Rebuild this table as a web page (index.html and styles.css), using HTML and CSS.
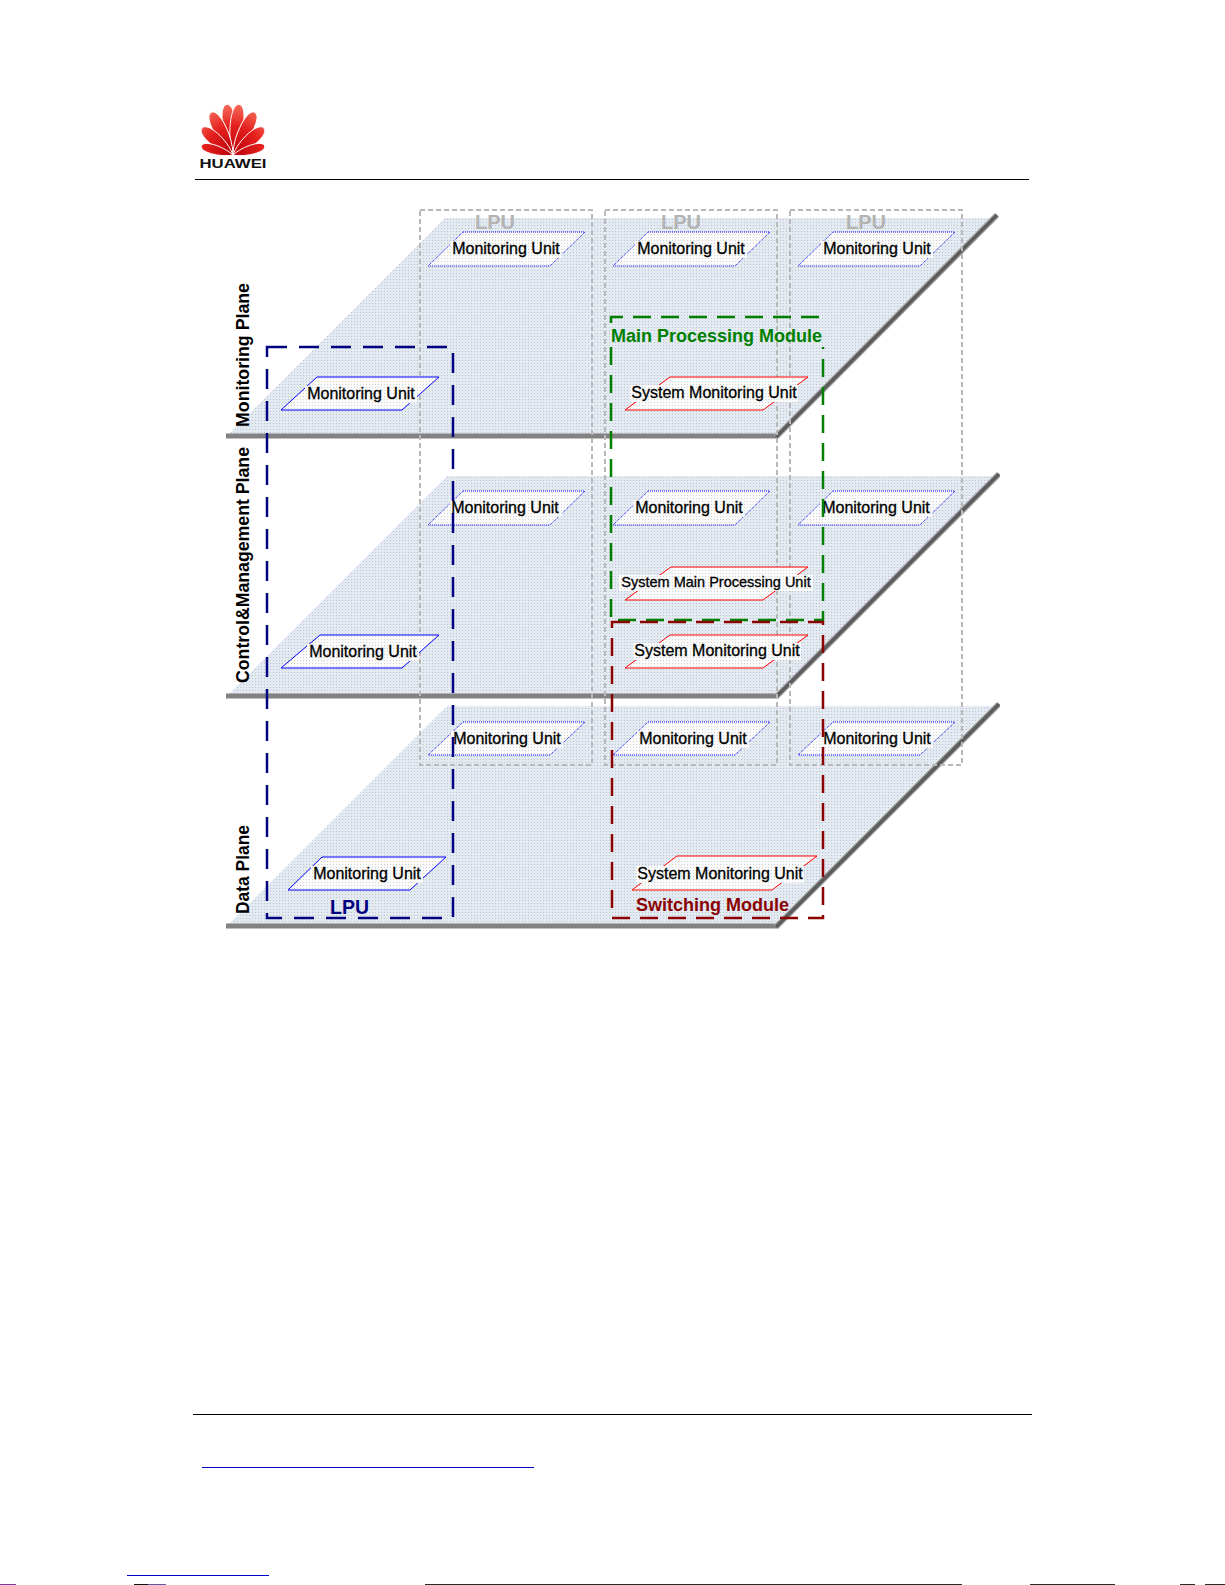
FILE: index.html
```html
<!DOCTYPE html>
<html lang="en">
<head>
<meta charset="utf-8">
<title>Monitoring Plane Architecture</title>
<link rel="stylesheet" href="styles.css">
</head>
<body>
<div class="page">
  <header class="header">
    <svg class="logo" viewBox="0 0 70 70" width="70" height="70">
      <defs>
        <radialGradient id="petalGrad" cx="0" cy="0" r="52" gradientUnits="userSpaceOnUse">
          <stop offset="0" stop-color="#b8000c"/>
          <stop offset="0.55" stop-color="#e41f1c"/>
          <stop offset="1" stop-color="#f8705e"/>
        </radialGradient>
      </defs>
      <g transform="translate(35,54)" class="petals">
        <path transform="rotate(-7)" d="M0,0 C-8.5,-18 -9,-51 0,-51 C9,-51 8.5,-18 0,0Z"/>
        <path transform="rotate(7)" d="M0,0 C-8.5,-18 -9,-51 0,-51 C9,-51 8.5,-18 0,0Z"/>
        <path transform="rotate(-27)" d="M0,0 C-8.5,-17 -9,-48 0,-48 C9,-48 8.5,-17 0,0Z"/>
        <path transform="rotate(27)" d="M0,0 C-8.5,-17 -9,-48 0,-48 C9,-48 8.5,-17 0,0Z"/>
        <path transform="rotate(-49)" d="M0,0 C-8,-14 -8.5,-41 0,-41 C8.5,-41 8,-14 0,0Z"/>
        <path transform="rotate(49)" d="M0,0 C-8,-14 -8.5,-41 0,-41 C8.5,-41 8,-14 0,0Z"/>
        <path transform="rotate(-74)" d="M0,0 C-6,-12 -6.5,-33 0,-33 C6.5,-33 6,-12 0,0Z"/>
        <path transform="rotate(74)" d="M0,0 C-6,-12 -6.5,-33 0,-33 C6.5,-33 6,-12 0,0Z"/>
      </g>
      <text class="logo-text" x="1.5" y="66.5" textLength="67" lengthAdjust="spacingAndGlyphs">HUAWEI</text>
    </svg>
  </header>

  <figure class="diagram-wrap">
    <svg class="diagram" viewBox="220 200 780 740" width="780" height="740">
      <defs>
        <pattern id="planeDots" width="3" height="3" patternUnits="userSpaceOnUse">
          <rect width="3" height="3" fill="#e3eaf2"/>
          <rect width="1" height="1" fill="#bcc4cd"/>
        </pattern>
        <pattern id="unitDots" width="3" height="3" patternUnits="userSpaceOnUse">
          <rect width="3" height="3" fill="#fbfbfb"/>
          <rect width="1" height="1" fill="#d2d2d2"/>
        </pattern>
      </defs>

      <!-- planes -->
      <polygon class="plane" points="227,436 777,436 995,218 445,218"/>
      <polygon class="plane" points="227,696 777,696 997,476 447,476"/>
      <polygon class="plane" points="227,926 777,926 997,706 447,706"/>

      <!-- plane edges -->
      <rect class="bar" x="226" y="433.5" width="552" height="5"/>
      <rect class="bar" x="226" y="693.5" width="552" height="5"/>
      <rect class="bar" x="226" y="923.5" width="552" height="5"/>
      <line class="diag-edge" x1="776" y1="437" x2="997" y2="215"/>
      <line class="diag" x1="776" y1="437" x2="997" y2="215"/>
      <line class="diag-edge" x1="776" y1="697" x2="999" y2="474"/>
      <line class="diag" x1="776" y1="697" x2="999" y2="474"/>
      <line class="diag-edge" x1="776" y1="927" x2="999" y2="704"/>
      <line class="diag" x1="776" y1="927" x2="999" y2="704"/>

      <!-- LPU columns -->
      <rect class="lpu-box" x="420" y="210" width="172" height="555"/>
      <rect class="lpu-box" x="605" y="210" width="172" height="555"/>
      <rect class="lpu-box" x="790" y="210" width="172" height="555"/>
      <text class="lpu-ghost" x="475" y="229">LPU</text>
      <text class="lpu-ghost" x="661" y="229">LPU</text>
      <text class="lpu-ghost" x="846" y="229">LPU</text>

      <!-- LPU monitoring units, monitoring plane -->
      <polygon class="unit unit-lpu" points="463,232 585,232 550,266 428,266"/>
      <rect class="label-bg" x="450" y="241" width="112" height="17"/>
      <text class="unit-label" x="506" y="254">Monitoring Unit</text>
      <polygon class="unit unit-lpu" points="648,232 770,232 735,266 613,266"/>
      <rect class="label-bg" x="635" y="241" width="112" height="17"/>
      <text class="unit-label" x="691" y="254">Monitoring Unit</text>
      <polygon class="unit unit-lpu" points="833,232 955,232 920,266 798,266"/>
      <rect class="label-bg" x="821" y="241" width="112" height="17"/>
      <text class="unit-label" x="877" y="254">Monitoring Unit</text>

      <!-- LPU monitoring units, control plane -->
      <polygon class="unit unit-lpu" points="463,491 585,491 550,525 428,525"/>
      <rect class="label-bg" x="450" y="500" width="112" height="17"/>
      <text class="unit-label" x="505" y="513">Monitoring Unit</text>
      <polygon class="unit unit-lpu" points="648,491 770,491 735,525 613,525"/>
      <rect class="label-bg" x="633" y="500" width="112" height="17"/>
      <text class="unit-label" x="689" y="513">Monitoring Unit</text>
      <polygon class="unit unit-lpu" points="833,491 955,491 920,525 798,525"/>
      <rect class="label-bg" x="820" y="500" width="112" height="17"/>
      <text class="unit-label" x="876" y="513">Monitoring Unit</text>

      <!-- LPU monitoring units, data plane -->
      <polygon class="unit unit-lpu" points="463,722 585,722 550,755 428,755"/>
      <rect class="label-bg" x="451" y="731" width="112" height="17"/>
      <text class="unit-label" x="507" y="744">Monitoring Unit</text>
      <polygon class="unit unit-lpu" points="648,722 770,722 735,755 613,755"/>
      <rect class="label-bg" x="637" y="731" width="112" height="17"/>
      <text class="unit-label" x="693" y="744">Monitoring Unit</text>
      <polygon class="unit unit-lpu" points="833,722 955,722 920,755 798,755"/>
      <rect class="label-bg" x="821" y="731" width="112" height="17"/>
      <text class="unit-label" x="877" y="744">Monitoring Unit</text>

      <!-- left LPU units -->
      <polygon class="unit unit-left" points="317,377 439,377 402,410 281,410"/>
      <rect class="label-bg" x="305" y="386" width="112" height="17"/>
      <text class="unit-label" x="361" y="399">Monitoring Unit</text>
      <polygon class="unit unit-left" points="320,635 439,635 402,668 281,668"/>
      <rect class="label-bg" x="307" y="644" width="112" height="17"/>
      <text class="unit-label" x="363" y="657">Monitoring Unit</text>
      <polygon class="unit unit-left" points="322,857 446,857 410,890 288,890"/>
      <rect class="label-bg" x="311" y="866" width="112" height="17"/>
      <text class="unit-label" x="367" y="879">Monitoring Unit</text>

      <!-- system units -->
      <polygon class="unit unit-sys" points="670,377 808,377 763,410 625,410"/>
      <rect class="label-bg" x="630" y="385" width="168" height="17"/>
      <text class="unit-label" x="714" y="398">System Monitoring Unit</text>
      <polygon class="unit unit-sys" points="671,567 808,567 763,600 625,600"/>
      <rect class="label-bg" x="619" y="575" width="194" height="16"/>
      <text class="unit-label small" x="716" y="587">System Main Processing Unit</text>
      <polygon class="unit unit-sys" points="670,635 808,635 763,668 625,668"/>
      <rect class="label-bg" x="633" y="643" width="168" height="17"/>
      <text class="unit-label" x="717" y="656">System Monitoring Unit</text>
      <polygon class="unit unit-sys" points="677,856 817,856 772,890 632,890"/>
      <rect class="label-bg" x="636" y="866" width="168" height="17"/>
      <text class="unit-label" x="720" y="879">System Monitoring Unit</text>

      <!-- modules -->
      <rect class="box-blue" x="267" y="347" width="186" height="571"/>
      <path class="box-green" d="M611,323 V317 H823 V323"/>
      <path class="box-green" d="M611,347 V620 H823 V347"/>
      <rect class="box-red" x="612" y="622" width="211" height="296"/>

      <text class="mod-green" x="611" y="341.5">Main Processing Module</text>
      <text class="mod-red" x="636" y="911">Switching Module</text>
      <text class="mod-navy" x="330" y="913.5">LPU</text>

      <!-- plane labels -->
      <text class="plane-label" transform="translate(249,427) rotate(-90)" textLength="144" lengthAdjust="spacingAndGlyphs">Monitoring Plane</text>
      <text class="plane-label" transform="translate(249,683) rotate(-90)" textLength="236" lengthAdjust="spacingAndGlyphs">Control&amp;Management Plane</text>
      <text class="plane-label" transform="translate(249,914) rotate(-90)" textLength="89" lengthAdjust="spacingAndGlyphs">Data Plane</text>
    </svg>
  </figure>

  <div class="footer-rule"></div>
  <div class="footnote-link"></div>
  <div class="page-link"></div>
  <div class="scan-row">
    <span class="scan s1"></span>
    <span class="scan s2"></span>
    <span class="scan s3"></span>
    <span class="scan s4"></span>
    <span class="scan s5"></span>
    <span class="scan s6"></span>
    <span class="scan s7"></span>
  </div>
</div>
</body>
</html>
```
FILE: styles.css
```css
html, body {
  margin: 0;
  padding: 0;
  background: #ffffff;
}

body {
  font-family: "Liberation Sans", Arial, sans-serif;
}

.page {
  width: 1225px;
  height: 1585px;
  overflow: hidden;
}

/* ---------- header ---------- */
.header {
  box-sizing: border-box;
  height: 180px;
  width: 834px;
  margin-left: 195px;
  padding-top: 101px;
  padding-left: 3px;
  border-bottom: 1px solid #000000;
}

.logo {
  display: block;
  width: 70px;
  height: 70px;
}

.petals path {
  fill: url(#petalGrad);
  stroke: #ffffff;
  stroke-width: 0.9;
}

.logo-text {
  font-family: "Liberation Sans", Arial, sans-serif;
  font-weight: bold;
  font-size: 13.5px;
  fill: #111111;
}

/* ---------- diagram ---------- */
.diagram-wrap {
  margin: 20px 0 0 220px;
  padding: 0;
  width: 780px;
  height: 740px;
}

.diagram {
  display: block;
  font-family: "Liberation Sans", Arial, sans-serif;
}

.plane {
  fill: url(#planeDots);
}

.bar {
  fill: #828282;
}

.diag-edge {
  stroke: #a8a8a8;
  stroke-width: 6;
}

.diag {
  stroke: #5c5c5c;
  stroke-width: 3.5;
}

.lpu-box {
  fill: none;
  stroke: #b9b9b9;
  stroke-width: 2;
  stroke-dasharray: 5 3;
}

.lpu-ghost {
  font-weight: bold;
  font-size: 20px;
  fill: #b3b3b3;
}

.unit {
  fill: url(#unitDots);
  stroke-width: 1;
}

.unit-lpu {
  stroke: #0000ff;
  stroke-dasharray: 1 1;
}

.unit-left {
  stroke: #0000ff;
}

.unit-sys {
  stroke: #ff0000;
}

.label-bg {
  fill: url(#unitDots);
}

.unit-label {
  font-size: 16px;
  fill: #000000;
  stroke: #000000;
  stroke-width: 0.3;
  text-anchor: middle;
}

.unit-label.small {
  font-size: 14.5px;
}

.box-blue {
  fill: none;
  stroke: #000080;
  stroke-width: 2.5;
  stroke-dasharray: 20 12;
}

.box-green {
  fill: none;
  stroke: #008000;
  stroke-width: 2.5;
  stroke-dasharray: 18 10;
}

.box-red {
  fill: none;
  stroke: #8b0000;
  stroke-width: 2.5;
  stroke-dasharray: 18 10;
}

.mod-green {
  font-weight: bold;
  font-size: 18px;
  fill: #008000;
}

.mod-red {
  font-weight: bold;
  font-size: 18px;
  fill: #8b0000;
}

.mod-navy {
  font-weight: bold;
  font-size: 19.5px;
  fill: #000080;
}

.plane-label {
  font-weight: bold;
  font-size: 19px;
  fill: #000000;
}

/* ---------- footer ---------- */
.footer-rule {
  margin: 474px 0 0 193px;
  width: 839px;
  border-top: 1px solid #000000;
}

.footnote-link {
  margin: 52px 0 0 202px;
  width: 332px;
  border-top: 1px solid #0000cc;
}

.page-link {
  margin: 107px 0 0 127px;
  width: 142px;
  border-top: 1px solid #0000cc;
}

.scan-row {
  display: flex;
  height: 1px;
  margin-top: 8px;
}

.scan {
  display: block;
  height: 1px;
}

.s1 { width: 16px; background: #7a3a9a; }
.s2 { width: 14px; margin-left: 118px; background: #111111; }
.s3 { width: 18px; background: #5a5aa0; }
.s4 { width: 537px; margin-left: 259px; background: #2a2a2a; }
.s5 { width: 85px; margin-left: 68px; background: #2a2a2a; }
.s6 { width: 15px; margin-left: 65px; background: #2a2a2a; }
.s7 { width: 20px; margin-left: 10px; background: #2a2a2a; }
```
